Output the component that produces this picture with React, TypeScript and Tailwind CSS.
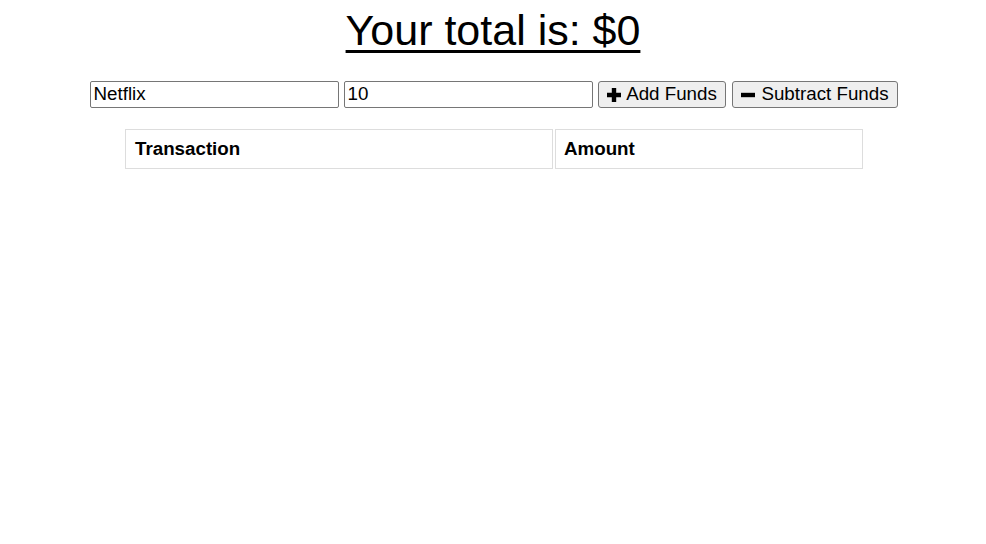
import React from "react";

export default function App() {
  return (
    <div className="w-[986px] h-[544px] bg-white text-black" style={{ fontFamily: '"Liberation Sans", Arial, sans-serif' }}>
      <h1 className="pt-[7px] text-center text-[43px] leading-[47px] font-normal underline decoration-[3px] underline-offset-[5px]">
        Your total is: $0
      </h1>
      <div className="mt-[27px] flex justify-center gap-[5px] items-center pl-[1px]">
        <input
          defaultValue="Netflix"
          className="w-[249px] h-[27px] border border-[#767676] rounded-[2px] px-[3px] text-[18.75px] outline-none"
        />
        <input
          defaultValue="10"
          className="w-[249px] h-[27px] border border-[#767676] rounded-[2px] px-[3px] text-[18.75px] outline-none"
        />
        <button className="h-[27px] w-[128px] border border-[#767676] rounded-[3px] bg-[#efefef] flex items-center justify-center gap-[4px] text-[18.75px] leading-none">
          <svg width="16" height="16" viewBox="0 0 16 16"><path d="M5.8 1h4.4v4.8H15v4.4h-4.8V15H5.8v-4.8H1V5.8h4.8z" fill="#000" /></svg>
          <span>Add Funds</span>
        </button>
        <button className="ml-[1px] h-[27px] w-[166px] border border-[#767676] rounded-[3px] bg-[#efefef] flex items-center justify-center gap-[5px] text-[18.75px] leading-none">
          <svg width="16" height="16" viewBox="0 0 16 16"><path d="M1 5.8h14v4.4H1z" fill="#000" /></svg>
          <span>Subtract Funds</span>
        </button>
      </div>
      <div className="mt-[21px] ml-[125px] w-[738px] grid grid-cols-[428px_308px] gap-[2px]">
        <div className="h-[40px] border border-[#dddddd] px-[9px] flex items-center text-[18.75px] font-bold">Transaction</div>
        <div className="h-[40px] border border-[#dddddd] px-[8px] flex items-center text-[18.75px] font-bold">Amount</div>
      </div>
    </div>
  );
}
